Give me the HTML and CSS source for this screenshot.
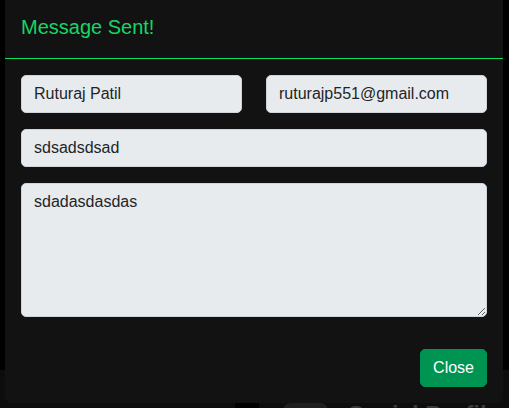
FILE: index.html
```html
<!DOCTYPE html>
<html>
<head>
<meta charset="utf-8">
<link rel="stylesheet" href="styles.css">
</head>
<body>
<div class="page">
  <div class="page-top"></div>
  <div class="page-cards">
    <div class="card card-left"></div>
    <div class="card card-right">
      <div class="avatar"></div>
      <div class="card-title">Social Profile</div>
    </div>
  </div>
</div>

<div class="modal">
  <div class="modal-content">
    <div class="modal-header">
      <h5 class="modal-title">Message Sent!</h5>
    </div>
    <div class="modal-body">
      <div class="row">
        <input class="form-control" type="text" value="Ruturaj Patil" readonly>
        <input class="form-control" type="text" value="ruturajp551@gmail.com" readonly>
      </div>
      <input class="form-control" type="text" value="sdsadsdsad" readonly>
      <textarea class="form-control textarea" readonly>sdadasdasdas</textarea>
    </div>
    <div class="modal-footer">
      <button class="btn-close-modal" type="button">Close</button>
    </div>
  </div>
</div>
</body>
</html>
```
FILE: styles.css
```css
* { box-sizing: border-box; }
html, body {
  margin: 0;
  padding: 0;
  background: #000;
  font-family: "Liberation Sans", Arial, sans-serif;
  height: 100%;
  overflow: hidden;
}
.page {
  height: 408px;
  display: flex;
  flex-direction: column;
}
.page-top {
  height: 370px;
  flex: none;
}
.page-cards {
  display: flex;
  gap: 24px;
  flex: 1;
}
.card {
  background: #0d0d0d;
}
.card-left {
  width: 235px;
}
.card-right {
  flex: 1;
  display: flex;
  align-items: flex-start;
  gap: 20px;
  padding: 33px 0 0 24px;
}
.avatar {
  width: 45px;
  height: 30px;
  border-radius: 8px;
  background: #1f1f1f;
}
.card-title {
  color: #3a3a3a;
  font-weight: bold;
  font-size: 24px;
  margin-top: -2px;
}

.modal {
  position: fixed;
  left: 5px;
  top: 0;
  width: 498px;
}
.modal-content {
  background: #121212;
  border-radius: 0 0 6px 6px;
  display: flex;
  flex-direction: column;
}
.modal-header {
  padding: 12px 16px 16px;
  border-bottom: 1px solid #10dc62;
}
.modal-title {
  margin: 0;
  font-size: 20px;
  font-weight: normal;
  line-height: 30px;
  color: #16d666;
}
.modal-body {
  padding: 16px;
  display: flex;
  flex-direction: column;
  gap: 16px;
}
.row {
  display: flex;
  gap: 24px;
}
.row .form-control {
  flex: 1;
  min-width: 0;
}
.form-control {
  display: block;
  width: 100%;
  height: 38px;
  padding: 6px 12px;
  font-family: "Liberation Sans", Arial, sans-serif;
  font-size: 16px;
  line-height: 24px;
  color: #212529;
  background: #e8ebee;
  border: 1px solid #ced4da;
  border-radius: 5px;
  outline: none;
}
.textarea {
  height: 134px;
  resize: vertical;
}
.modal-footer {
  padding: 16px;
  display: flex;
  justify-content: flex-end;
}
.btn-close-modal {
  height: 38px;
  padding: 6px 12px;
  font-family: "Liberation Sans", Arial, sans-serif;
  font-size: 16px;
  line-height: 24px;
  color: #fff;
  background: #009453;
  border: 1px solid #009453;
  border-radius: 5px;
}
```
